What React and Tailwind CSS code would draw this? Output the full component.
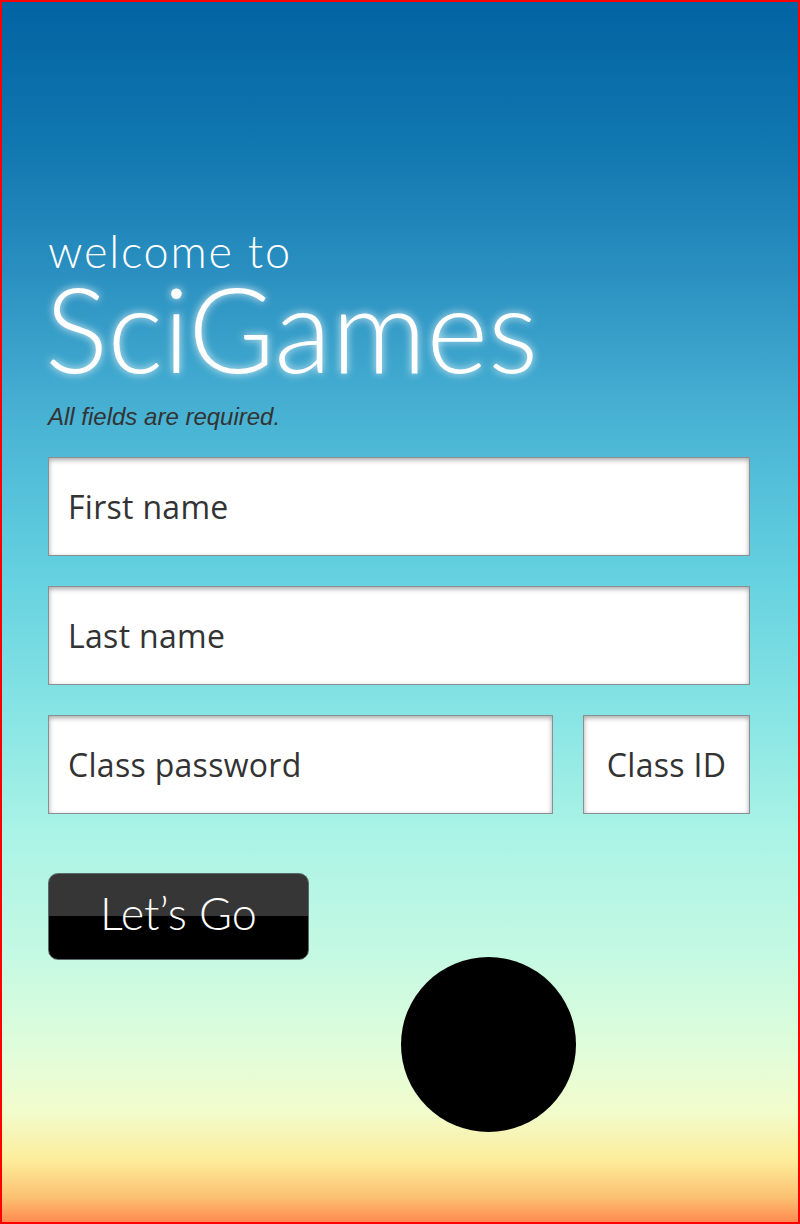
import React from 'react';

const Field = ({ label, className = '', center = false }) => (
  <div
    className={`h-[99px] bg-white border border-[#8a8f93] shadow-[inset_0_2px_5px_rgba(0,0,0,0.35)] flex items-center ${center ? 'justify-center' : 'pl-[19px]'} ${className}`}
  >
    <span className="text-[32px] text-[#333] font-['Open_Sans',sans-serif] tracking-[0.3px]">{label}</span>
  </div>
);

const App = () => {
  return (
    <div className="w-[800px] h-[1224px] border-2 border-[#ff0000] overflow-hidden bg-[linear-gradient(to_bottom,#0263a2_0%,#1178b0_12%,#2a8fc0_22%,#48b2d4_34%,#62cfdf_46%,#86e4e4_58%,#aaf3e6_68%,#c4f9e3_78%,#e0fdda_86%,#f2fccc_91%,#fdec9a_95%,#fcc072_98%,#ff8a50_100%)]">
      <div className="pl-[46px] pr-[48px] pt-[222px]">
        <div className="font-['Lato',sans-serif] font-light text-white text-[45px] leading-[54px] tracking-[1.8px]">
          welcome to
        </div>
        <div className="font-['Lato',sans-serif] font-light text-white text-[118px] leading-[100px] -ml-[3px] [text-shadow:0_0_8px_rgba(255,255,255,0.85)]">
          SciGames
        </div>
        <div className="mt-[26px] font-['Liberation_Sans',sans-serif] italic text-[24px] leading-[26px] text-[#333]">
          All fields are required.
        </div>

        <div className="mt-[27px] flex flex-col gap-[30px]">
          <Field label="First name" />
          <Field label="Last name" />
          <div className="flex gap-[30px]">
            <Field label="Class password" className="w-[505px]" />
            <Field label="Class ID" className="flex-1" center />
          </div>
        </div>

        <button className="mt-[59px] w-[261px] h-[87px] rounded-[10px] border border-[#5a6a6a] overflow-hidden bg-[linear-gradient(to_bottom,#363636_0%,#363636_49%,#000_49%,#000_100%)] flex items-center justify-center pb-[6px]">
          <span className="font-['Lato',sans-serif] font-light text-white text-[45px] leading-none">Let’s Go</span>
        </button>

        <div className="ml-[353px] -mt-[3px] w-[175px] h-[175px] rounded-full bg-black" />
      </div>
    </div>
  );
};

export default App;
